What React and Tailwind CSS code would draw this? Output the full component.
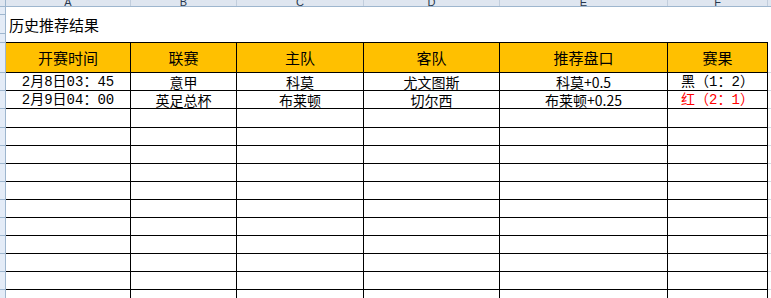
const cols = [
  { key: 'A', w: 'w-[125px]' },
  { key: 'B', w: 'w-[106px]' },
  { key: 'C', w: 'w-[127px]' },
  { key: 'D', w: 'w-[136px]' },
  { key: 'E', w: 'w-[168px]' },
  { key: 'F', w: 'w-[100px]' },
];

const headers = ['开赛时间', '联赛', '主队', '客队', '推荐盘口', '赛果'];

const results = [
  ['2月8日03：45', '意甲', '科莫', '尤文图斯', '科莫+0.5', '黑（1：2）'],
  ['2月9日04：00', '英足总杯', '布莱顿', '切尔西', '布莱顿+0.25', '红（2：1）'],
];

const emptyRows = ['h-[19px]', 'h-[18px]', 'h-[18px]', 'h-[18px]', 'h-[18px]', 'h-[18px]', 'h-[18px]', 'h-[18px]', 'h-[18px]', 'h-[18px]', 'h-[18px]'];

// time and score columns use fixed-width digits
const monoCols = [0, 5];

function RowHead({ line = true }) {
  return (
    <div
      className={`w-[6px] shrink-0 self-stretch bg-[#e4ecf7] border-r border-[#9eb6ce] ${
        line ? 'border-b' : ''
      }`}
    />
  );
}

function Row({ h, children, gridLine = false, headLine = true }) {
  return (
    <div className={`flex ${h}`}>
      <RowHead line={headLine} />
      {children}
      <div className={`flex-1 ${gridLine ? 'border-b border-[#d6dbe3]' : ''}`} />
    </div>
  );
}

export default function App() {
  return (
    <div
      className="w-[771px] h-[298px] overflow-hidden bg-white text-black"
      style={{ fontFamily: '"Noto Sans CJK SC", "Liberation Sans", sans-serif' }}
    >
      {/* column letters */}
      <div className="flex h-[7px] bg-[#dfe6f0] border-b border-[#9eb6ce]">
        <div className="w-[6px] shrink-0 border-r border-[#9eb6ce]" />
        {cols.map((c) => (
          <div
            key={c.key}
            className={`${c.w} shrink-0 border-r border-[#c2cedd] overflow-hidden flex items-end justify-center`}
          >
            <span className="text-[11px] leading-[11px] mb-[-2px] text-[#27374d]" style={{ fontFamily: '"Liberation Sans", sans-serif' }}>
              {c.key}
            </span>
          </div>
        ))}
        <div className="flex-1" />
      </div>

      <Row h="h-[8px]" />
      <Row h="h-[19px]">
        <div className="flex items-center pl-[3px] text-[15px] leading-none whitespace-nowrap">历史推荐结果</div>
      </Row>
      <Row h="h-[9px]">
        <div className="flex">
          {cols.map((c) => (
            <div key={c.key} className={`${c.w} shrink-0 border-b border-black`} />
          ))}
        </div>
      </Row>

      {/* header row */}
      <Row h="h-[30px]" gridLine>
        {headers.map((t, i) => (
          <div
            key={t}
            className={`${cols[i].w} shrink-0 bg-[#ffc000] border-r border-b border-black flex items-center justify-center text-[15px] leading-none`}
          >
            {t}
          </div>
        ))}
      </Row>

      {results.map((r, ri) => (
        <Row key={ri} h="h-[18px]" gridLine>
          {r.map((t, i) => (
            <div
              key={i}
              className={`${cols[i].w} shrink-0 border-r border-b border-black flex items-center justify-center text-[14px] leading-none whitespace-nowrap ${
                i === 5 && t.startsWith('红') ? 'text-[#ff0000]' : ''
              }`}
              style={
                monoCols.includes(i)
                  ? { fontFamily: '"Liberation Mono", "Noto Sans CJK SC", monospace' }
                  : undefined
              }
            >
              {t}
            </div>
          ))}
        </Row>
      ))}

      {emptyRows.map((h, ri) => (
        <Row key={`e${ri}`} h={h} gridLine>
          {cols.map((c) => (
            <div key={c.key} className={`${c.w} shrink-0 border-r border-b border-black`} />
          ))}
        </Row>
      ))}
    </div>
  );
}
